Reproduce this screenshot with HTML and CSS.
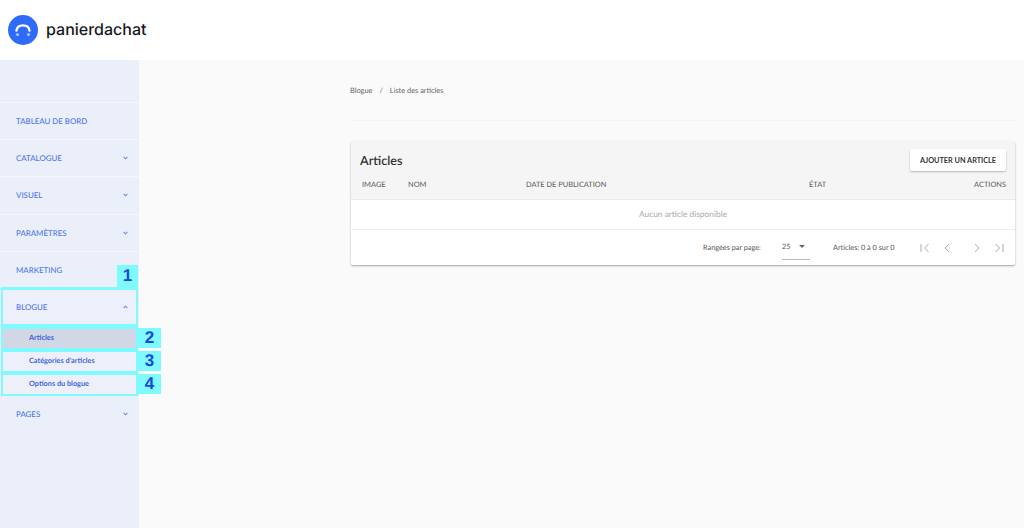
FILE: index.html
```html
<!DOCTYPE html>
<html lang="fr">
<head>
<meta charset="utf-8">
<title>Articles</title>
<link rel="stylesheet" href="styles.css">
</head>
<body>
<header class="topbar">
  <svg class="logo-mark" width="30" height="30" viewBox="0 0 30 30" aria-hidden="true">
    <circle cx="15" cy="15" r="15" fill="#2e6bfa"/>
    <path d="M8.5 15.6C9 12 12 10.4 15 10.4C18 10.4 21 12 21.5 15.6" fill="none" stroke="#fff" stroke-width="2.4" stroke-linecap="round"/>
    <circle cx="9.5" cy="19.5" r="1.6" fill="#a9c3fc"/>
    <circle cx="20.5" cy="19.5" r="1.6" fill="#a9c3fc"/>
  </svg>
  <span class="logo-text">panierdachat</span>
</header>
<div class="layout">
  <nav class="sidebar">
    <a class="nav-item">TABLEAU DE BORD</a>
    <a class="nav-item">CATALOGUE<svg class="chev" viewBox="0 0 6 4"><path d="M0.8 0.8L3 3L5.2 0.8" /></svg></a>
    <a class="nav-item">VISUEL<svg class="chev" viewBox="0 0 6 4"><path d="M0.8 0.8L3 3L5.2 0.8" /></svg></a>
    <a class="nav-item">PARAMÈTRES<svg class="chev" viewBox="0 0 6 4"><path d="M0.8 0.8L3 3L5.2 0.8" /></svg></a>
    <a class="nav-item">MARKETING</a>
    <div class="callouts">
      <a class="nav-item blog">BLOGUE<svg class="chev" viewBox="0 0 6 4"><path d="M0.8 3.2L3 1L5.2 3.2" /></svg><span class="tag tag-top">1</span></a>
      <a class="sub active">Articles<span class="tag tag-side">2</span></a>
      <a class="sub">Catégories d'articles<span class="tag tag-side">3</span></a>
      <a class="sub">Options du blogue<span class="tag tag-side">4</span></a>
    </div>
    <a class="nav-item pages">PAGES<svg class="chev" viewBox="0 0 6 4"><path d="M0.8 0.8L3 3L5.2 0.8" /></svg></a>
  </nav>
  <main class="main">
    <div class="crumbs"><span>Blogue</span><span class="sep">/</span><span>Liste des articles</span></div>
    <section class="card">
      <div class="card-head">
        <div class="title-row">
          <h1>Articles</h1>
          <button class="add">AJOUTER UN ARTICLE</button>
        </div>
        <div class="cols">
          <span class="c-img">IMAGE</span>
          <span class="c-name">NOM</span>
          <span class="c-date">DATE DE PUBLICATION</span>
          <span class="c-state">ÉTAT</span>
          <span class="c-act">ACTIONS</span>
        </div>
      </div>
      <div class="empty">Aucun article disponible</div>
      <div class="pager">
        <span class="rows">Rangées par page:</span>
        <span class="select">25<i class="caret"></i></span>
        <span class="range">Articles: 0 à 0 sur 0</span>
        <span class="pg-icons">
          <svg viewBox="0 0 12 12"><path d="M2 2V10M9.5 2L5.5 6L9.5 10"/></svg>
          <svg viewBox="0 0 12 12"><path d="M8 2L4 6L8 10"/></svg>
          <svg class="gap" viewBox="0 0 12 12"><path d="M4 2L8 6L4 10"/></svg>
          <svg viewBox="0 0 12 12"><path d="M10 2V10M2.5 2L6.5 6L2.5 10"/></svg>
        </span>
      </div>
    </section>
  </main>
</div>
</body>
</html>
```
FILE: styles.css
```css
* { box-sizing: border-box; }
html, body { margin: 0; height: 100%; overflow: hidden; }
body { font-family: Lato, "Open Sans", sans-serif; background: #fafafa; color: #444; text-rendering: geometricPrecision; }

.topbar { height: 60px; background: #fff; display: flex; align-items: center; padding-left: 8px; gap: 8px; }
.logo-mark { display: block; flex: none; margin-top: -1px; }
.logo-text { font-family: Inter, "Liberation Sans", sans-serif; font-size: 16px; font-weight: 500; letter-spacing: 0; color: #17181c; margin-top: -3px; }

.layout { display: flex; height: 468px; }
.sidebar { width: 139px; flex: none; background: #eaeff9; padding-top: 42px; }
.nav-item { position: relative; display: flex; align-items: center; justify-content: space-between; height: 37.2px; padding: 0 11px 0 16px; border-top: 1px solid #f5f7fc; font-size: 7.9px; font-weight: 500; color: #5178ec; }
.chev { width: 5px; height: 4px; fill: none; stroke: #6f8fe6; stroke-width: 1.3; }

.callouts { margin: -1px 1px 0; width: 137px; background: #7ffbff; padding: 3px 2px; height: 109px; display: flex; flex-direction: column; }
.blog { height: 34px; background: #edf0fa; border-top: 0; padding-right: 8px; padding-left: 13px; margin-bottom: 5px; flex: none; padding-top: 1px; }
.sub { position: relative; display: flex; align-items: center; height: 19px; margin-bottom: 4px; padding-left: 26px; background: #edf0fa; font-size: 7.3px; font-weight: 700; color: #3f66e0; flex: none; padding-bottom: 2px; }
.sub:last-child { margin-bottom: 0; }
.sub.active { background: #d2d7e6; color: #3a5fd8; }
.pages { margin-top: 0; border-top: 0; height: 36px; }

.tag { position: absolute; display: flex; align-items: center; justify-content: center; background: #7ffbff; color: #1a47e0; font-family: "Liberation Sans", sans-serif; font-size: 17px; font-weight: 700; }
.tag-top { right: -2px; top: -25px; width: 21px; height: 22px; }
.tag-side { left: 135px; top: -1px; width: 23px; height: 20px; }

.main { flex: 1; padding: 0 9px 0 211px; }
.crumbs { height: 61px; border-bottom: 1px solid #f3f3f3; padding-top: 26px; font-size: 7.4px; line-height: 10px; color: #666; display: flex; gap: 7px; }
.card { margin-top: 20px; margin-left: 1px; background: #fff; border-radius: 2px; box-shadow: 0 1px 2px rgba(0,0,0,.35); }
.card-head { background: #f5f5f5; height: 59px; border-bottom: 1px solid #e9e9e9; }
.title-row { display: flex; align-items: center; justify-content: space-between; height: 38px; padding: 0 9px 0 9px; }
h1 { margin: 0; font-size: 12.6px; color: #333; font-weight: 600; }
.add { font-family: inherit; border: 0; background: #fff; height: 22px; width: 96px; padding: 0; border-radius: 2px; box-shadow: 0 1px 2px rgba(0,0,0,.25); font-size: 7.3px; font-weight: 700; color: #333; }
.cols { position: relative; display: flex; height: 12px; font-size: 7.4px; line-height: 12px; font-weight: 500; color: #666; }
.c-img { margin-left: 11px; width: 46px; }
.c-name { width: 118px; }
.c-date { width: 283px; }
.c-state { flex: 1; }
.c-act { margin-right: 9px; }
.empty { height: 30px; display: flex; align-items: center; justify-content: center; font-size: 8.4px; color: #aaa; border-bottom: 1px solid #ececec; padding-bottom: 1px; }
.pager { height: 35px; display: flex; align-items: center; font-size: 7.3px; color: #555; padding-left: 352px; white-space: nowrap; }
.rows { width: 79px; flex: none; }
.select { position: relative; display: flex; align-items: center; width: 28px; height: 25px; flex: none; border-bottom: 1px solid #bbb; margin-bottom: 1px; }
.caret { margin-left: 9px; border: 3.5px solid transparent; border-top: 3.5px solid #666; border-bottom: 0; }
.range { margin-left: 23px; width: 61px; flex: none; }
.pg-icons { display: flex; align-items: center; margin-left: 25px; gap: 10px; }
.pg-icons svg { width: 12px; height: 12px; fill: none; stroke: #aaa; stroke-width: 1; flex: none; }
.pg-icons svg.gap { margin-left: 8px; }
```
